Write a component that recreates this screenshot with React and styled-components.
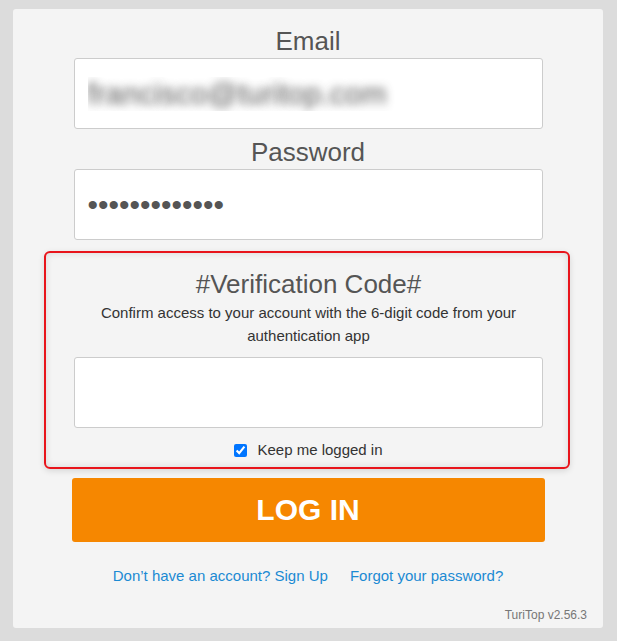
import React from 'react';
import styled, { createGlobalStyle } from 'styled-components';

const GlobalStyle = createGlobalStyle`
  html, body {
    margin: 0;
    padding: 0;
    background: #dcdcdc;
    font-family: "Liberation Sans", Arial, sans-serif;
  }
`;

const Page = styled.div`
  padding: 9px 14px 14px 13px;
`;

const Card = styled.form`
  width: 590px;
  box-sizing: border-box;
  background: #f4f4f4;
  border-radius: 3px;
  padding: 17px 16px 6px 16px;
  display: flex;
  flex-direction: column;
  align-items: center;
`;

const Field = styled.div`
  width: 469px;
  display: flex;
  flex-direction: column;
  align-items: center;
  margin-bottom: ${({ $last }) => ($last ? '11px' : '8px')};
`;

const Label = styled.label`
  font-size: 26px;
  line-height: 30px;
  color: #555;
  margin-bottom: 2px;
`;

const Input = styled.input`
  width: 469px;
  height: 71px;
  box-sizing: border-box;
  border: 1px solid #ccc;
  border-radius: 3px;
  background: #fff;
  padding: 0 13px;
  font-family: "Liberation Sans", Arial, sans-serif;
  font-size: 30px;
  color: #555;
  outline: none;
`;

const BlurredInput = styled(Input)`
  color: transparent;
  text-shadow: 0 0 9px rgba(60, 60, 60, 0.85);
`;

const Highlight = styled.div`
  width: 526px;
  box-sizing: border-box;
  margin-right: 2px;
  border: 2px solid #e8141b;
  border-radius: 6px;
  padding: 16px 25px 7px 28px;
  box-shadow: 0 2px 6px rgba(0, 0, 0, 0.12), inset 0 0 7px rgba(0, 0, 0, 0.12);
  display: flex;
  flex-direction: column;
  align-items: center;
`;

const Title = styled.h2`
  margin: 0;
  font-size: 26px;
  line-height: 30px;
  font-weight: normal;
  color: #555;
`;

const Hint = styled.p`
  margin: 2px 0 10px;
  width: 450px;
  font-size: 15px;
  line-height: 23px;
  color: #333;
  text-align: center;
`;

const CheckRow = styled.label`
  margin-top: 12px;
  display: flex;
  align-items: center;
  gap: 10px;
  font-size: 15px;
  line-height: 20px;
  color: #333;

  input {
    margin: 0;
    width: 13px;
    height: 13px;
    accent-color: #0075ff;
  }
`;

const LoginButton = styled.button`
  margin-top: 9px;
  width: 473px;
  height: 64px;
  border: none;
  border-radius: 3px;
  background: #f68700;
  color: #fff;
  font-family: "Liberation Sans", Arial, sans-serif;
  font-size: 30px;
  font-weight: bold;
  cursor: pointer;
`;

const Links = styled.div`
  margin-top: 24px;
  display: flex;
  gap: 22px;
  font-size: 15px;
  line-height: 20px;
`;

const Link = styled.a`
  color: #1b8ad3;
  text-decoration: none;
`;

const Version = styled.div`
  align-self: flex-end;
  margin-top: 22px;
  font-size: 12px;
  line-height: 14px;
  color: #777;
`;

const App = () => (
  <Page>
    <GlobalStyle />
    <Card onSubmit={(e) => e.preventDefault()}>
      <Field>
        <Label>Email</Label>
        <BlurredInput type="text" defaultValue="francisco@turitop.com" />
      </Field>
      <Field $last>
        <Label>Password</Label>
        <Input type="password" defaultValue="turitoppass12" />
      </Field>
      <Highlight>
        <Title>#Verification Code#</Title>
        <Hint>Confirm access to your account with the 6-digit code from your authentication app</Hint>
        <Input type="text" />
        <CheckRow>
          <input type="checkbox" defaultChecked />
          Keep me logged in
        </CheckRow>
      </Highlight>
      <LoginButton type="submit">LOG IN</LoginButton>
      <Links>
        <Link href="#">Don’t have an account? Sign Up</Link>
        <Link href="#">Forgot your password?</Link>
      </Links>
      <Version>TuriTop v2.56.3</Version>
    </Card>
  </Page>
);

export default App;
